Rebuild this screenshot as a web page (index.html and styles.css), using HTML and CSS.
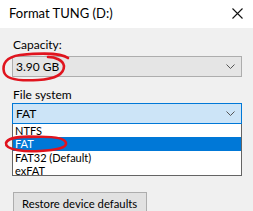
FILE: index.html
```html
<!DOCTYPE html>
<html>
<head>
<meta charset="utf-8">
<link rel="stylesheet" href="styles.css">
</head>
<body>
<div class="win">
  <div class="titlebar">
    <span class="title">Format TUNG (D:)</span>
    <svg class="close" width="11" height="11" viewBox="0 0 11 11"><path d="M0.5 0.5 L10.5 10.5 M10.5 0.5 L0.5 10.5" stroke="#111" stroke-width="1.1" fill="none"/></svg>
  </div>
  <div class="content">
    <div class="label first">Capacity:</div>
    <div class="combo gray">
      <span>3.90 GB</span>
      <svg class="chev" width="9" height="5" viewBox="0 0 9 5"><path d="M0.5 0.5 L4.5 4.5 L8.5 0.5" stroke="#555" stroke-width="1" fill="none"/></svg>
    </div>
    <div class="label">File system</div>
    <div class="combo active">
      <span>FAT</span>
      <svg class="chev" width="9" height="5" viewBox="0 0 9 5"><path d="M0.5 0.5 L4.5 4.5 L8.5 0.5" stroke="#555" stroke-width="1" fill="none"/></svg>
    </div>
    <div class="list">
      <div class="item">NTFS</div>
      <div class="item sel">FAT</div>
      <div class="item">FAT32 (Default)</div>
      <div class="item">exFAT</div>
    </div>
    <div class="btn">Restore device defaults</div>
  </div>
  <svg class="marks" width="253" height="211" viewBox="0 0 253 211">
    <path d="M68 58 C 62 53, 40 53, 20 55 C 6 57, 2 64, 4 72 C 6 80, 22 81, 38 80 C 55 79, 64 74, 64 66 C 63 60, 55 57, 48 57" stroke="#e0141e" stroke-width="2.6" fill="none" stroke-linecap="round"/>
    <path d="M40 137 C 25 136, 8 137, 6 143 C 5 150, 25 152, 40 151 C 56 150, 67 148, 66 143 C 65 138, 52 136, 30 137" stroke="#e0141e" stroke-width="2.6" fill="none" stroke-linecap="round"/>
  </svg>
</div>
</body>
</html>
```
FILE: styles.css
```css
html, body {
  margin: 0;
  padding: 0;
}
body {
  width: 253px;
  height: 211px;
  overflow: hidden;
  font-family: Lato, "Noto Sans", "Liberation Sans", sans-serif;
  font-size: 12px;
  color: #000;
  background: #f0f0f0;
}
.win {
  position: relative;
  width: 253px;
  height: 211px;
  overflow: hidden;
}
.titlebar {
  height: 28px;
  background: #fff;
  display: flex;
  align-items: center;
  justify-content: space-between;
  padding: 0 10px 2px 9px;
  box-sizing: border-box;
}
.title {
  font-size: 13px;
}
.close {
  display: block;
}
.content {
  background: #f0f0f0;
  padding: 0 11px 0 12px;
  height: 183px;
}
.label {
  height: 16px;
  line-height: 16px;
  padding-left: 1px;
  margin-top: 10px;
  margin-bottom: 0;
}
.label.first {
  margin-top: 9px;
  margin-bottom: 3px;
}
.combo {
  height: 21px;
  box-sizing: border-box;
  border: 1px solid #adadad;
  display: flex;
  align-items: center;
  justify-content: space-between;
  padding: 0 6px 0 3px;
}
.combo.gray {
  background: #e5e5e5;
}
.combo.active {
  background: #cce4f7;
  border-color: #0078d7;
}
.chev {
  display: block;
}
.list {
  border: 1px solid #646464;
  border-top: none;
  background: #fff;
  height: 52px;
  box-sizing: border-box;
}
.item {
  height: 13px;
  line-height: 13px;
  font-size: 11px;
  padding-left: 2px;
}
.item.sel {
  background: #0078d7;
  color: #fff;
  height: 14px;
  line-height: 14px;
}
.btn {
  margin-top: 16px;
  margin-left: 1px;
  width: 134px;
  height: 24px;
  box-sizing: border-box;
  border: 1px solid #adadad;
  background: #e1e1e1;
  line-height: 21px;
  font-size: 11.3px;
  padding-left: 8px;
  white-space: nowrap;
}
.marks {
  position: absolute;
  left: 0;
  top: 0;
  pointer-events: none;
}
```
